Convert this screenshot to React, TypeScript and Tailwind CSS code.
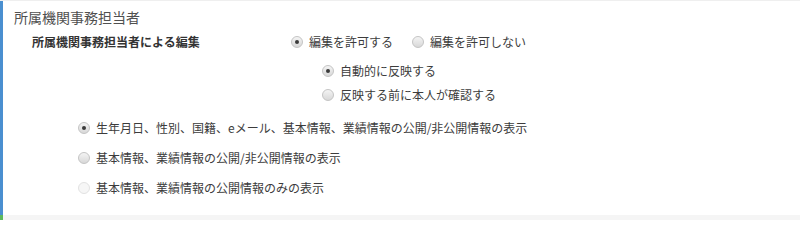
import React from "react";

function Radio({ checked, disabled, label }: { checked?: boolean; disabled?: boolean; label: string }) {
  return (
    <div className="flex h-[20px] items-center gap-[6px]">
      <span
        className={
          disabled
            ? "flex h-[12px] w-[12px] items-center justify-center rounded-full border border-[#e2e2e2] bg-[#f6f6f6]"
            : "flex h-[12px] w-[12px] items-center justify-center rounded-full border border-[#c4c4c4] bg-gradient-to-b from-[#f4f4f4] to-[#d8d8d8]"
        }
      >
        {checked && <span className="block h-[4px] w-[4px] rounded-full bg-[#3a3a3a]" />}
      </span>
      <span className="text-[12px] leading-[20px] text-[#3c3c3c]">{label}</span>
    </div>
  );
}

export default function App() {
  return (
    <div
      className="flex h-[220px] w-[800px] flex-col overflow-hidden bg-[#efefef]"
      style={{ fontFamily: '"Noto Sans CJK JP", "Noto Sans", sans-serif' }}
    >
      <div className="mt-[1px] flex h-[214px] shrink-0 flex-col border-l-[3px] border-[#4a8fd0] bg-white pt-[6px]">
        <div className="flex h-[20px] items-center pl-[11px] text-[14px] leading-[20px] text-[#505050]">
          所属機関事務担当者
        </div>
        <div className="mt-[5px] flex h-[20px] items-center">
          <div className="w-[288px] pl-[29px] text-[12px] font-bold leading-[20px] text-[#333]">
            所属機関事務担当者による編集
          </div>
          <Radio checked label="編集を許可する" />
          <div className="ml-[19px]">
            <Radio label="編集を許可しない" />
          </div>
        </div>
        <div className="ml-[319px] mt-[9px] flex flex-col gap-[4px]">
          <Radio checked label="自動的に反映する" />
          <Radio label="反映する前に本人が確認する" />
        </div>
        <div className="ml-[75px] mt-[13px] flex flex-col gap-[10px]">
          <Radio checked label="生年月日、性別、国籍、eメール、基本情報、業績情報の公開/非公開情報の表示" />
          <Radio label="基本情報、業績情報の公開/非公開情報の表示" />
          <Radio disabled label="基本情報、業績情報の公開情報のみの表示" />
        </div>
      </div>
      <div className="flex-1 border-l-[3px] border-[#5cb85c] bg-[#f5f5f5]" />
    </div>
  );
}
